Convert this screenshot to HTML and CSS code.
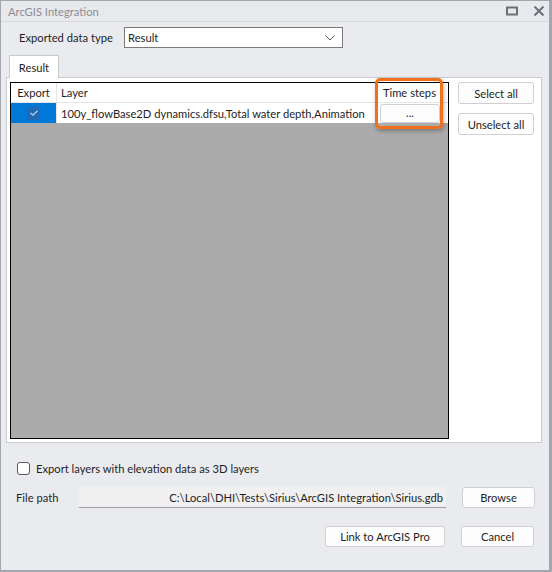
FILE: index.html
```html
<!DOCTYPE html>
<html lang="en">
<head>
  <meta charset="UTF-8">
  <title>ArcGIS Integration</title>
  <link rel="stylesheet" href="styles.css">
</head>
<body>
<div class="window">
  <div class="titlebar">
    <span class="title">ArcGIS Integration</span>
    <div class="title-buttons">
      <svg class="tb-icon" width="12" height="10" viewBox="0 0 12 10"><rect x="1" y="1.5" width="10" height="7" fill="none" stroke="#6e6e78" stroke-width="2"/></svg>
      <svg class="tb-icon" width="12" height="10" viewBox="0 0 12 10"><path d="M1.5 0.5 L10.5 9.5 M10.5 0.5 L1.5 9.5" stroke="#6e6e78" stroke-width="2"/></svg>
    </div>
  </div>

  <div class="content">
    <div class="type-row">
      <span class="label">Exported data type</span>
      <div class="combo">
        <span>Result</span>
        <svg width="10" height="6" viewBox="0 0 10 6"><path d="M0.5 0.5 L5 5 L9.5 0.5" fill="none" stroke="#555" stroke-width="1"/></svg>
      </div>
    </div>

    <div class="tabs">
      <div class="tab">Result</div>
    </div>
    <div class="tab-panel">
      <div class="grid">
        <div class="grid-head">
          <div class="cell c-export">Export</div>
          <div class="cell c-layer">Layer</div>
          <div class="cell c-steps">Time steps</div>
        </div>
        <div class="grid-row">
          <div class="cell c-export selected">
            <span class="check">
              <svg width="8" height="6" viewBox="0 0 8 6"><path d="M0.5 3 L3 5.2 L7.5 0.8" fill="none" stroke="#b8d4f0" stroke-width="1.2"/></svg>
            </span>
          </div>
          <div class="cell c-layer">100y_flowBase2D dynamics.dfsu,Total water depth,Animation</div>
          <div class="cell c-steps">
            <button class="btn dots">...</button>
          </div>
        </div>
        <div class="highlight"></div>
      </div>
      <div class="side-buttons">
        <button class="btn side">Select all</button>
        <button class="btn side">Unselect all</button>
      </div>
    </div>

    <label class="check-row">
      <span class="box"></span>
      Export layers with elevation data as 3D layers
    </label>

    <div class="path-row">
      <span class="label">File path</span>
      <div class="path-field">C:\Local\DHI\Tests\Sirius\ArcGIS Integration\Sirius.gdb</div>
      <button class="btn small">Browse</button>
    </div>

    <div class="action-row">
      <button class="btn link">Link to ArcGIS Pro</button>
      <button class="btn small">Cancel</button>
    </div>
  </div>
</div>
</body>
</html>
```

FILE: styles.css
```css
* {
  box-sizing: border-box;
}

body {
  margin: 0;
  font-family: Lato, "Liberation Sans", sans-serif;
  font-size: 11.2px;
  color: #1e1e1e;
  background: #ffffff;
}

.window {
  width: 552px;
  height: 572px;
  border: 1px solid #a4a6ae;
  border-right-width: 3px;
  border-bottom-width: 2px;
  background: #eaebef;
  display: flex;
  flex-direction: column;
}

.titlebar {
  height: 21px;
  border-bottom: 1px solid #d8d9de;
  background: #e8e9ed;
  display: flex;
  align-items: center;
  justify-content: space-between;
  padding: 0 4px 0 7px;
}

.title {
  color: #8c8d94;
}

.title-buttons {
  display: flex;
  gap: 15px;
}

.content {
  flex: 1;
  padding: 5px 3px 0 5px;
  display: flex;
  flex-direction: column;
}

.label {
  white-space: nowrap;
}

.type-row {
  display: flex;
  align-items: center;
  padding-left: 13px;
  height: 21px;
}

.type-row .label {
  width: 105px;
}

.combo {
  width: 219px;
  height: 21px;
  border: 1px solid #7a7a7a;
  background: #ffffff;
  display: flex;
  align-items: center;
  justify-content: space-between;
  padding: 0 7px 0 3px;
}

.tabs {
  display: flex;
  padding-left: 3px;
  margin-top: 7px;
}

.tab {
  width: 50px;
  height: 23px;
  border: 1px solid #c9cace;
  border-bottom: none;
  background: #ffffff;
  display: flex;
  align-items: center;
  justify-content: center;
  margin-bottom: -1px;
  position: relative;
}

.tab-panel {
  width: 536px;
  height: 366px;
  border: 1px solid #c9cace;
  background: #ffffff;
  display: flex;
  padding: 4px 0 0 3px;
  gap: 9px;
}

.grid {
  width: 439px;
  height: 357px;
  border: 1px solid #000000;
  background: #ababab;
  position: relative;
}

.grid-head,
.grid-row {
  display: flex;
  height: 20px;
  background: #ffffff;
}

.grid-head {
  border-bottom: 1px solid #e4e4e4;
}

.cell {
  display: flex;
  align-items: center;
  padding: 0 4px;
  border-right: 1px solid #e4e4e4;
  white-space: nowrap;
}

.c-export {
  width: 46px;
  justify-content: center;
}

.c-layer {
  width: 320px;
  padding-left: 4px;
}

.c-steps {
  flex: 1;
  justify-content: flex-end;
  padding: 0 12px 0 2px;
  border-right: none;
}

.grid-row .c-steps {
  padding: 0 8px 0 2px;
}

.selected {
  background: #0078d7;
}

.check {
  width: 13px;
  height: 13px;
  border-radius: 2px;
  background: #2169b4;
  display: flex;
  align-items: center;
  justify-content: center;
}

.btn {
  font-family: inherit;
  font-size: 11.2px;
  color: #1e1e1e;
  background: #fdfdfd;
  border: 1px solid #d0d0d4;
  border-radius: 3px;
  padding: 0;
  height: 21px;
}

.dots {
  width: 60px;
  height: 19px;
  line-height: 10px;
}

/* orange frame around the time steps column */
.highlight {
  position: absolute;
  left: 364px;
  top: -5px;
  width: 68px;
  height: 51px;
  border: 3px solid #f0701e;
  border-radius: 5px;
  box-shadow: 1px 2px 4px rgba(0, 0, 0, 0.3);
}

.side-buttons {
  display: flex;
  flex-direction: column;
  gap: 9px;
}

.btn.side {
  width: 76px;
  height: 22px;
}

.check-row {
  display: flex;
  align-items: center;
  gap: 6px;
  margin: 18px 0 0 11px;
  height: 14px;
}

.box {
  width: 13px;
  height: 13px;
  border: 1px solid #5a5a5a;
  border-radius: 3px;
  background: #ffffff;
}

.path-row {
  display: flex;
  align-items: center;
  margin-top: 12px;
  padding-left: 10px;
  height: 21px;
}

.path-row .label {
  width: 63px;
}

.path-field {
  width: 367px;
  height: 21px;
  background: #f0f0f0;
  border-bottom: 1px solid #a0a0a0;
  display: flex;
  align-items: center;
  justify-content: flex-end;
  padding-right: 3px;
  white-space: nowrap;
}

.btn.small {
  width: 73px;
  margin-left: 16px;
}

.action-row {
  display: flex;
  justify-content: flex-end;
  padding-right: 12px;
  margin-top: 18px;
}

.btn.link {
  width: 120px;
}
```
